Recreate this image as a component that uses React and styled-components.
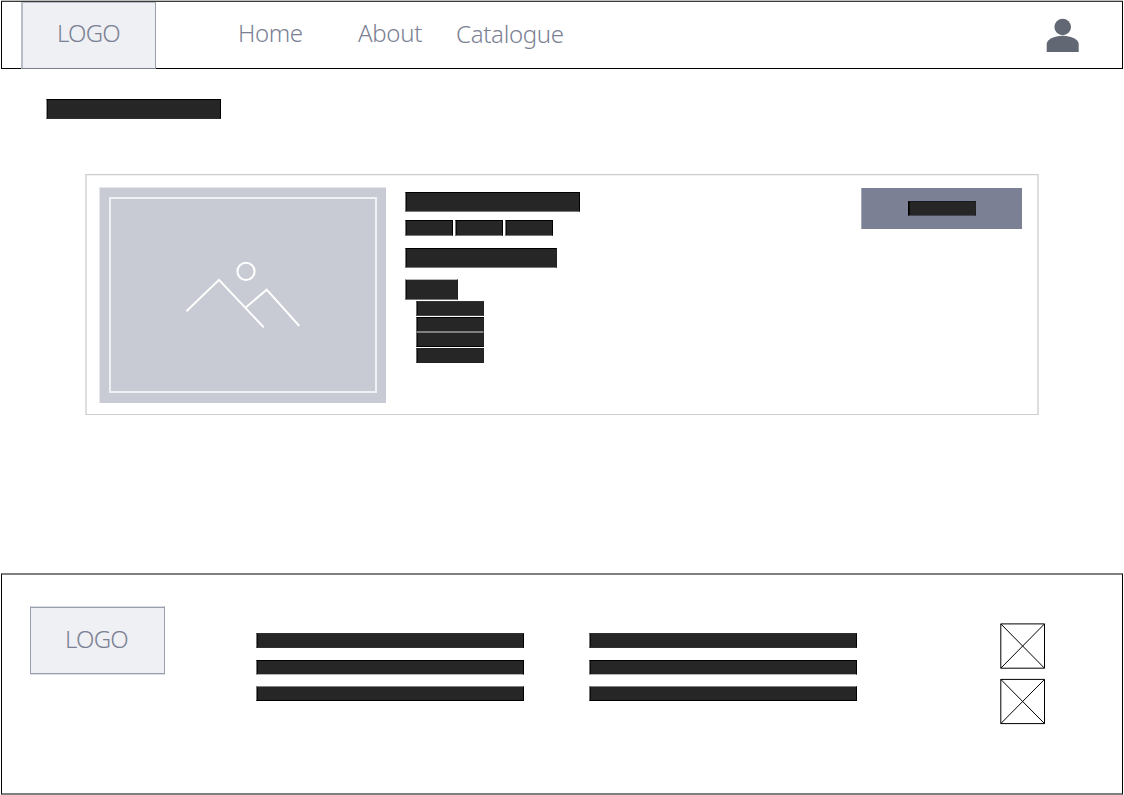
import React from "react";
import styled, { createGlobalStyle } from "styled-components";

const Global = createGlobalStyle`
  * { box-sizing: border-box; }
  body { margin: 0; background: #fff; font-family: "Noto Sans", "Open Sans", sans-serif; }
  svg { display: block; }
`;

const Page = styled.div`
  width: 1124px;
  height: 795px;
  padding: 1px 1px 0;
  display: flex;
  flex-direction: column;
  overflow: hidden;
`;

const Header = styled.header`
  flex: none;
  width: 1122px;
  height: 68px;
  display: flex;
  padding-left: 19px;
  border: 1px solid #000;
  border-top-color: #3c3c3c;
  box-shadow: 0 -1px #bcbfbc;
`;

const Logo = styled.div`
  flex: none;
  width: 135px;
  height: ${(p) => (p.$docked ? 67 : 68)}px;
  padding-top: ${(p) => (p.$docked ? 13 : 15)}px;
  padding-left: ${(p) => (p.$docked ? 35 : 34)}px;
  border: 1px solid #9a9fae;
  border-top-color: ${(p) => (p.$docked ? "#b9bdc8" : "#dcdee4")};
  border-bottom-color: ${(p) => (p.$docked ? "#7b8091" : "#9a9fae")};
  border-left-color: ${(p) => (p.$docked ? "#b9bdc8" : "#9a9fae")};
  box-shadow: ${(p) => (p.$docked ? "inset 1px 0 #b9bdc8" : "inset 0 1px #9a9fae, 0 1px #dcdee4")};
  background: #eff0f4;
  color: #7b8194;
  font-size: 24px;
  font-weight: 350;
  line-height: 34px;
  letter-spacing: -0.8px;
`;

const Nav = styled.nav`
  display: flex;
  flex: 1;
`;

const NavLink = styled.a`
  width: ${(p) => p.$width}px;
  padding-top: ${(p) => p.$top}px;
  color: #7b8194;
  font-size: 24px;
  font-weight: 350;
  line-height: 34px;
  white-space: nowrap;
  letter-spacing: ${(p) => p.$spacing ?? 0}px;

  &:first-child { margin-left: 82px; }
`;

const Account = styled.div`
  padding: 16px 42px 0 0;
`;

const Bar = styled.div`
  flex: none;
  width: ${(p) => p.$w}px;
  height: ${(p) => p.$h}px;
  background: #262626;
  border: 1px solid;
  border-color: ${(p) => p.$edges ?? "#000 #000 #000 #777"};
  box-shadow: inset 1px 0 #0c0c0c;
`;

const Main = styled.main`
  height: 504px;
  flex: none;
  padding: 30px 84px 0 84px;
`;

const PageTitle = styled.div`
  margin-left: -39px;
  height: 75px;
`;

const Card = styled.article`
  width: 954px;
  height: 241px;
  display: flex;
  border: 1px solid #cecece;
  border-left: 2px solid #dedede;
  border-right: 2px solid #dedede;
  box-shadow: inset 0 1px #f2f2f2;
  padding: 12px 15px 0 12px;
`;

const Thumb = styled.div`
  flex: none;
  width: 287px;
  height: 216px;
  padding: 10px;
  background: #c8cad4;
  border: solid #e6e7ec;
  border-width: 1px 0 0 1px;
`;

const Frame = styled.div`
  width: 268px;
  height: 196px;
  margin: -1px 0 0 -1px;
  border: 2px solid #f0f1f5;
`;

const Details = styled.div`
  flex: 1;
  padding: 5px 0 0 19px;
`;

const Row = styled.div`
  display: flex;
  gap: 2px;
  margin: 8px 0 12px;
`;

const Stack = styled.div`
  display: flex;
  flex-direction: column;
`;

const Options = styled(Stack)`
  padding: 1px 0 0 11px;
`;

const Spacer = styled.div`
  height: ${(p) => p.$h}px;
`;

const Button = styled.button`
  width: 161px;
  height: 41px;
  margin-top: 1px;
  padding: 13px 0 0 46px;
  display: flex;
  align-items: flex-start;
  border: 0;
  border-left: 1px solid #a4a8b5;
  background: #7b8094;
`;

const Footer = styled.footer`
  flex: none;
  width: 1122px;
  height: 222px;
  display: flex;
  align-items: flex-start;
  border: solid #000;
  border-width: 2px 1px;
  border-top-color: #808080;
  border-bottom-color: #808080;
  padding: 31px 0 0 28px;
`;

const FooterColumn = styled(Stack)`
  margin: 27px 0 0 ${(p) => p.$left}px;
`;

const Social = styled.div`
  margin: 17px 0 0 143px;
`;

const FooterBars = ({ left }) => (
  <FooterColumn $left={left}>
    <Bar $w={268} $h={15} $edges="#303030 #000 #303030 #777" />
    <Spacer $h={12} />
    <Bar $w={268} $h={15} $edges="#000 #000 #b4b4b4 #777" />
    <Spacer $h={11} />
    <Bar $w={268} $h={15} $edges="#808380 #000 #000 #777" />
  </FooterColumn>
);

export default function App() {
  return (
    <>
      <Global />
      <Page>
        <Header>
          <Logo $docked>LOGO</Logo>
          <Nav>
            <NavLink $width={120} $top={14} $spacing={-0.4}>Home</NavLink>
            <NavLink $width={98} $top={14} $spacing={-0.3}>About</NavLink>
            <NavLink $width={110} $top={15} $spacing={-0.3}>Catalogue</NavLink>
          </Nav>
          <Account>
            <svg width="34" height="36" viewBox="0 0 34 36" fill="#616874">
              <circle cx="16.7" cy="9" r="8.3" />
              <path d="M.7 34V26C.7 21.5 8 17.7 16.7 17.7S32.7 21.5 32.7 26V34Z" />
            </svg>
          </Account>
        </Header>
        <Main>
          <PageTitle>
            <Bar $w={175} $h={20} $edges="#000 #000 #303030 #999" />
          </PageTitle>
          <Card>
            <Thumb>
              <Frame>
                <svg width="264" height="192" viewBox="111 199 264 192" fill="none" stroke="#fff" strokeWidth="2">
                  <circle cx="246" cy="271.4" r="8.6" />
                  <path d="M186.4 311.3 219 279.8 263.8 327.4M245.7 307.4 266.7 289.7 299.3 326" />
                </svg>
              </Frame>
            </Thumb>
            <Details>
              <Bar $w={175} $h={20} $edges="#000 #000 #777 #777" />
              <Row>
                <Bar $w={48} $h={16} $edges="#000 #000 #777 #777" />
                <Bar $w={48} $h={16} $edges="#000 #000 #777 #777" />
                <Bar $w={48} $h={16} $edges="#000 #000 #777 #777" />
              </Row>
              <Bar $w={152} $h={20} $edges="#000 #222 #777 #777" />
              <Spacer $h={11} />
              <Bar $w={53} $h={21} $edges="#b4b8b4 #222 #777 #777" />
              <Options>
                <Bar $w={68} $h={15} $edges="#333 #222 #444 #666" />
                <Spacer $h={1} />
                <Bar $w={68} $h={15} $edges="#000 #222 #808080 #666" />
                <Bar $w={68} $h={15} $edges="#808080 #222 #000 #666" />
                <Spacer $h={1} />
                <Bar $w={68} $h={15} $edges="#222 #222 #222 #666" />
              </Options>
            </Details>
            <Button>
              <Bar $w={68} $h={15} $edges="#161820 #222 #444854 #000" />
            </Button>
          </Card>
        </Main>
        <Footer>
          <Logo>LOGO</Logo>
          <FooterBars left={91} />
          <FooterBars left={65} />
          <Social>
            <svg width="46" height="102" viewBox="0 0 46 102" fill="none" stroke="#000">
              <path d="M.8.9H44.5V45.2H.8ZM.8.9 44.5 45.2M44.5.9.8 45.2" />
              <path d="M.8 56.4H44.5V100.6H.8ZM.8 56.4 44.5 100.6M44.5 56.4.8 100.6" />
            </svg>
          </Social>
        </Footer>
      </Page>
    </>
  );
}
